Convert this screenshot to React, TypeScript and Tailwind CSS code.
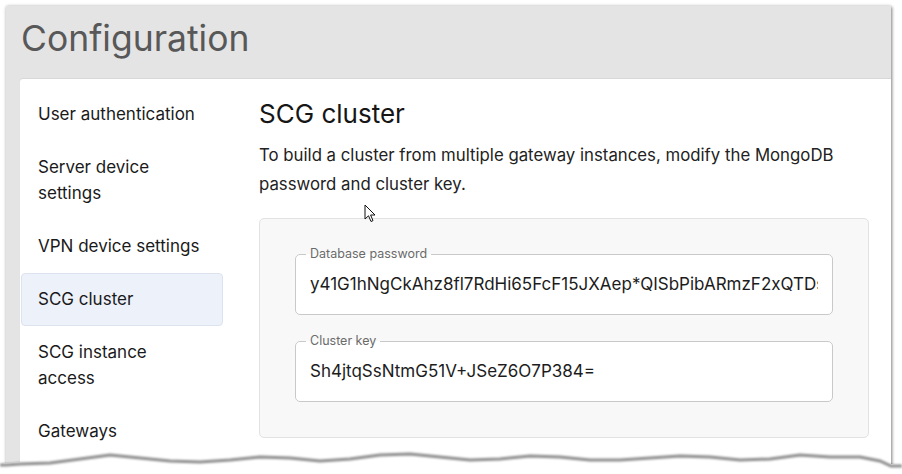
const NAV = [
  { label: 'User authentication' },
  { label: 'Server device settings', twoLine: ['Server device', 'settings'] },
  { label: 'VPN device settings' },
  { label: 'SCG cluster', active: true },
  { label: 'SCG instance access', twoLine: ['SCG instance', 'access'] },
  { label: 'Gateways' },
];

// torn paper edge, absolute y of the wave at each x
const WAVE: [number, number][] = [
  [0, 463], [6, 463], [20, 462], [50, 461], [80, 457], [110, 453], [140, 456], [170, 459],
  [200, 460], [230, 458], [260, 455], [290, 456], [320, 459], [350, 457], [380, 453],
  [410, 452], [440, 455], [470, 458], [500, 457], [530, 454], [560, 455], [590, 458],
  [620, 458], [650, 456], [680, 454], [710, 455], [740, 458], [770, 457], [800, 453],
  [830, 455], [860, 455], [880, 459], [891, 464], [902, 464],
];

function TornEdge() {
  const top = 434;
  const line = WAVE.map(([x, y], i) => `${i === 0 ? 'M' : 'L'}${x},${y - top}`).join(' ');
  const shadow = WAVE.map(([x, y], i) => `${i === 0 ? 'M' : 'L'}${x},${y - top + 2}`).join(' ');
  return (
    <svg className="absolute left-0 bottom-0" width="902" height="40" viewBox="0 0 902 40">
      <defs>
        <filter id="blur" x="-5%" y="-50%" width="110%" height="200%">
          <feGaussianBlur stdDeviation="1.3" />
        </filter>
      </defs>
      <path d={`${line} L902,40 L0,40 Z`} fill="#ffffff" />
      <path d={shadow} stroke="rgba(0,0,0,0.45)" strokeWidth="3" fill="none" filter="url(#blur)" />
    </svg>
  );
}

function Cursor() {
  return (
    <svg className="absolute left-[364px] top-[204px]" width="13" height="20" viewBox="0 0 13 20">
      <path d="M1,1 L1,15 L4.5,11.8 L7,17.5 L9,16.6 L6.6,11 L11,11 Z" fill="#fff" stroke="#111" strokeWidth="1" strokeLinejoin="round" />
    </svg>
  );
}

function Field({ label, value }: { label: string; value: string }) {
  return (
    <fieldset className="border border-[#c9c9c9] rounded-[5px] bg-white min-w-0">
      <legend className="ml-[10px] px-[4px] text-[12.5px] leading-[16px] text-[#6b6b6b]">{label}</legend>
      <div className="h-[52px] pl-[14px] pr-[14px] pb-[7px] flex items-center text-[17px] text-[#1c1c1c]">
        <div className="flex-1 min-w-0 overflow-hidden whitespace-nowrap">{value}</div>
      </div>
    </fieldset>
  );
}

export default function App() {
  return (
    <div className="relative w-[902px] h-[474px] bg-white overflow-hidden pt-[6px] pl-[6px] font-['Inter',sans-serif]">
      <div className="w-[885px] h-[480px] bg-[#e4e4e4] flex flex-col shadow-[1px_1px_3px_rgba(0,0,0,0.45),0_0_4px_rgba(0,0,0,0.12)]">
        <div className="h-[73px] shrink-0 pl-[15px] flex items-center">
          <h1 className="text-[35.5px] leading-none text-[#585858] pb-[8px]">Configuration</h1>
        </div>
        <div className="flex-1 ml-[14px] bg-white rounded-tl-[3px] flex shadow-[0_-1px_1px_rgba(0,0,0,0.06)]">
          <nav className="w-[203px] shrink-0 pt-[8.5px] pl-[1px] flex flex-col">
            {NAV.map(item => (
              <div
                key={item.label}
                className={`pl-[16px] py-[12.5px] text-[17px] leading-[26px] text-[#1a1a1a] rounded-[4px] border ${
                  item.active ? 'bg-[#edf1fa] border-[#dde3ee]' : 'border-transparent'
                }`}
              >
                {item.twoLine ? (
                  <>
                    <div>{item.twoLine[0]}</div>
                    <div>{item.twoLine[1]}</div>
                  </>
                ) : (
                  item.label
                )}
              </div>
            ))}
          </nav>
          <main className="flex-1 min-w-0 pl-[36px] pr-[22px] pt-[18px]">
            <h2 className="text-[26px] leading-[34px] text-[#161616]">SCG cluster</h2>
            <p className="mt-[10px] text-[16.8px] leading-[29px] text-[#222]">
              To build a cluster from multiple gateway instances, modify the MongoDB password and cluster key.
            </p>
            <div className="mt-[19px] bg-[#f8f8f8] border border-[#e2e2e2] rounded-[5px] pt-[27px] pb-[35px] px-[35px] flex flex-col gap-[18px]">
              <Field label="Database password" value="y41G1hNgCkAhz8fl7RdHi65FcF15JXAep*QISbPibARmzF2xQTDs" />
              <Field label="Cluster key" value="Sh4jtqSsNtmG51V+JSeZ6O7P384=" />
            </div>
          </main>
        </div>
      </div>
      <Cursor />
      <TornEdge />
    </div>
  );
}
